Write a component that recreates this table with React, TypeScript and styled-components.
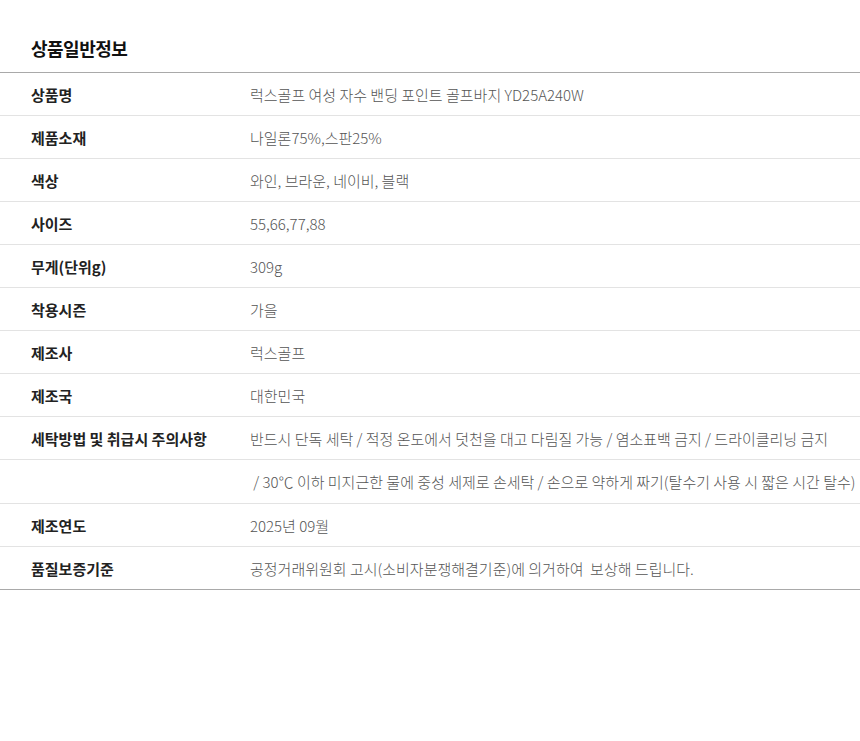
import styled, { createGlobalStyle } from "styled-components";

const GlobalStyle = createGlobalStyle`
  html, body {
    margin: 0;
    padding: 0;
    background: #fff;
  }
  body {
    font-family: "Noto Sans CJK KR", "Noto Sans", sans-serif;
  }
`

const Section = styled.section`
  width: 860px;
  padding-top: 36px;
`

const Title = styled.h3`
  margin: 0;
  padding: 0 31px 12px;
  font-size: 18px;
  line-height: 24px;
  font-weight: 700;
  color: #111;
  letter-spacing: -0.5px;
`

const InfoTable = styled.table`
  width: 100%;
  border-collapse: collapse;
  border-top: 1px solid #a9a9a9;
  border-bottom: 1px solid #a9a9a9;
`

const Row = styled.tr<{ $tall?: boolean }>`
  height: ${p => (p.$tall ? 44 : 43)}px;
  border-bottom: 1px solid #e3e3e3;
  &:last-child {
    border-bottom: none;
  }
`

const Label = styled.th`
  width: 219px;
  padding: 0 0 0 31px;
  text-align: left;
  font-size: 15px;
  font-weight: 700;
  color: #222;
  vertical-align: middle;
`

const Value = styled.td`
  padding: 0;
  font-size: 15px;
  font-weight: 300;
  color: #555;
  white-space: pre;
  vertical-align: middle;
`

const rows: { label: string; value: string; tall?: boolean }[] = [
    { label: "상품명", value: "럭스골프 여성 자수 밴딩 포인트 골프바지 YD25A240W" },
    { label: "제품소재", value: "나일론75%,스판25%" },
    { label: "색상", value: "와인, 브라운, 네이비, 블랙" },
    { label: "사이즈", value: "55,66,77,88" },
    { label: "무게(단위g)", value: "309g" },
    { label: "착용시즌", value: "가을" },
    { label: "제조사", value: "럭스골프" },
    { label: "제조국", value: "대한민국" },
    { label: "세탁방법 및 취급시 주의사항", value: "반드시 단독 세탁 / 적정 온도에서 덧천을 대고 다림질 가능 / 염소표백 금지 / 드라이클리닝 금지" },
    { label: "", value: " / 30℃ 이하 미지근한 물에 중성 세제로 손세탁 / 손으로 약하게 짜기(탈수기 사용 시 짧은 시간 탈수)", tall: true },
    { label: "제조연도", value: "2025년 09월" },
    { label: "품질보증기준", value: "공정거래위원회 고시(소비자분쟁해결기준)에 의거하여  보상해 드립니다." },
]

export default () => {
    return <>
        <GlobalStyle />
        <Section>
            <Title>상품일반정보</Title>
            <InfoTable>
                <tbody>
                    {rows.map((row, i) => (
                        <Row key={i} $tall={row.tall}>
                            <Label>{row.label}</Label>
                            <Value>{row.value}</Value>
                        </Row>
                    ))}
                </tbody>
            </InfoTable>
        </Section>
    </>
}
